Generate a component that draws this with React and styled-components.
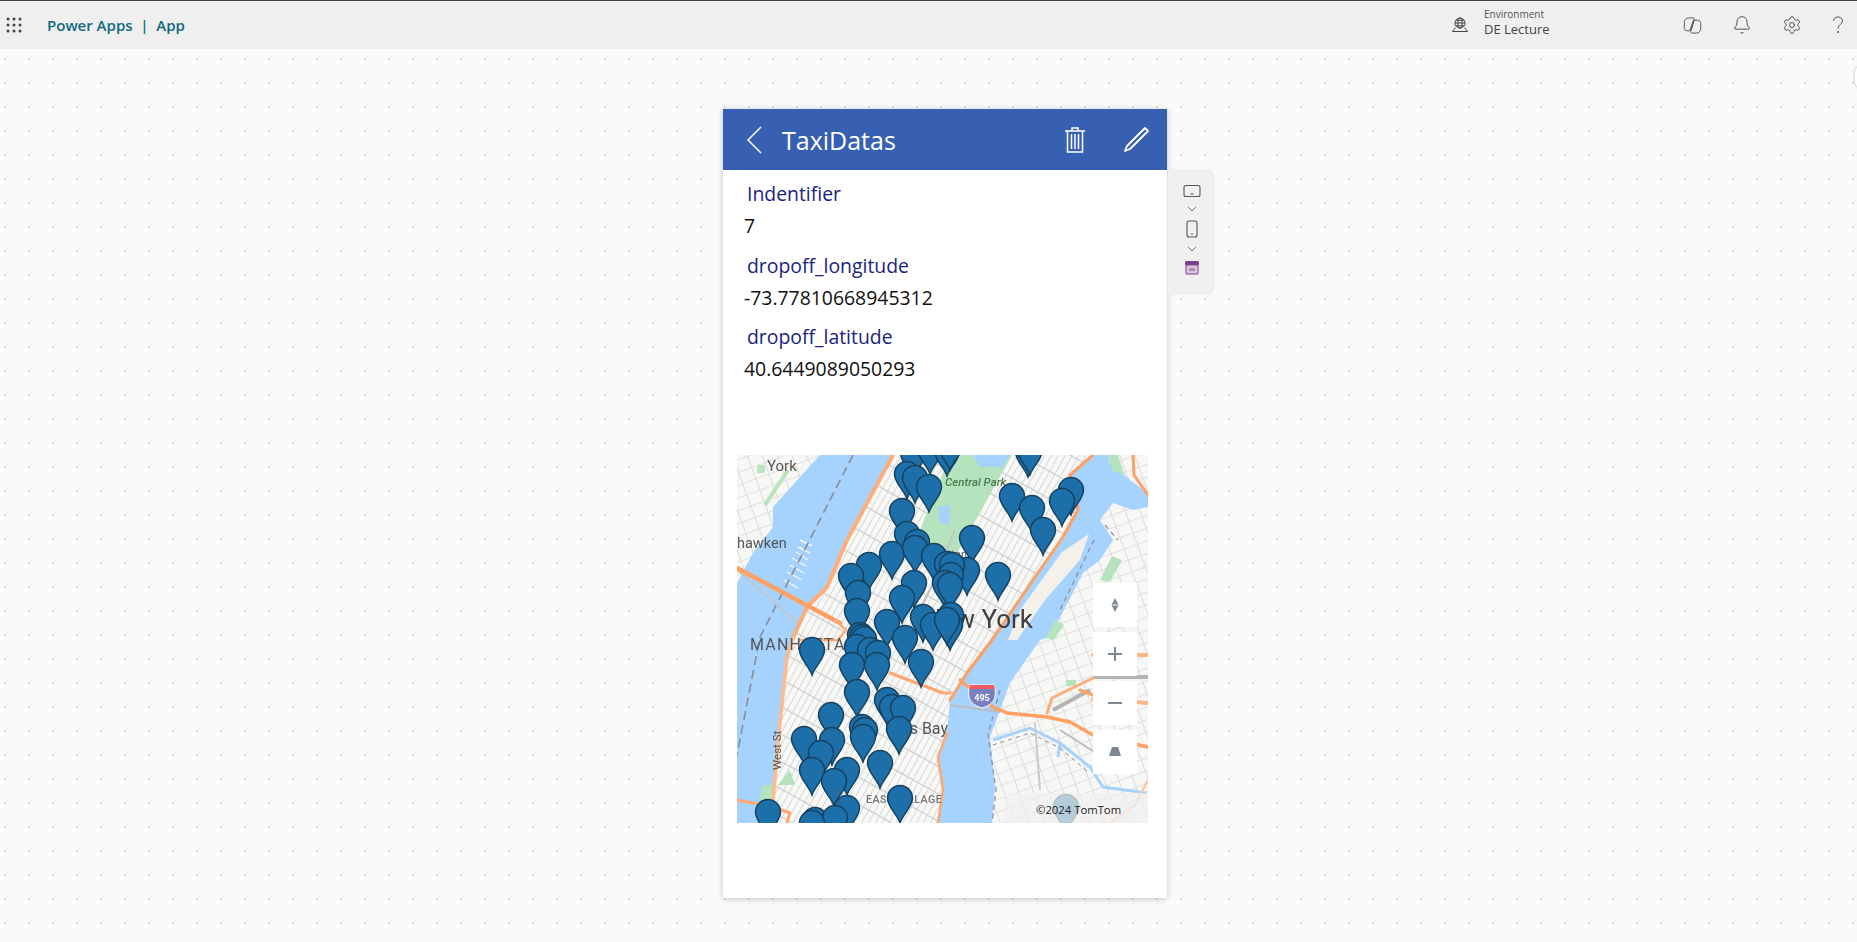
import React from 'react';
import styled, { createGlobalStyle } from 'styled-components';
import { Bell, Settings } from 'lucide-react';

const GlobalStyle = createGlobalStyle`
  html, body { margin: 0; padding: 0; height: 100%; overflow: hidden; }
  body { font-family: "Open Sans", "Liberation Sans", sans-serif; background: #fafafa; }
  #root { height: 100%; }
`;

const Page = styled.div`
  height: 100%;
  display: flex;
  flex-direction: column;
  position: relative;
`;

const TopBar = styled.header`
  height: 48px;
  flex: none;
  display: flex;
  align-items: center;
  background: #efefef;
  border-top: 1px solid #444;
  color: #444;
`;

const Waffle = styled.svg`
  width: 16px;
  height: 16px;
  margin: 0 25px 0 6px;
  flex: none;
`;

const Brand = styled.div`
  font-size: 15px;
  font-weight: 600;
  color: #0f6a80;
  white-space: pre;
`;

const Environment = styled.div`
  margin-left: auto;
  display: flex;
  align-items: center;
  gap: 15px;
`;

const EnvText = styled.div`
  display: flex;
  flex-direction: column;
  width: 199px;
  padding-bottom: 5px;
`;

const EnvLabel = styled.span`
  font-size: 10px;
  line-height: 13px;
  color: #555;
`;

const EnvName = styled.span`
  font-size: 13px;
  line-height: 17px;
  color: #444;
`;

const BarIcons = styled.div`
  display: flex;
  align-items: center;
  gap: 30px;
  padding-right: 13px;
`;

const Canvas = styled.main`
  flex: 1;
  display: flex;
  align-items: flex-start;
  padding: 60px 0 0 723px;
  background-color: #fafafa;
  background-image: radial-gradient(circle at 1px 1px, #dadada 1px, transparent 1.2px);
  background-size: 24px 24px;
  background-position: 4px 9px;
`;

const Card = styled.section`
  width: 444px;
  height: 789px;
  flex: none;
  background: #fff;
  box-shadow: 0 1px 6px rgba(0, 0, 0, 0.22);
`;

const CardHeader = styled.div`
  height: 61px;
  display: flex;
  align-items: center;
  background: #3860b2;
  color: #fff;
  padding: 0 17px 0 23px;
`;

const CardTitle = styled.h1`
  margin: 0 auto 0 20px;
  font-size: 25px;
  font-weight: 400;
`;

const Fields = styled.div`
  height: 285px;
  padding-top: 7px;
  box-sizing: border-box;
`;

const Field = styled.div`
  height: 71.5px;
`;

const FieldLabel = styled.div`
  padding-left: 24px;
  font-size: 19.4px;
  line-height: 34px;
  color: #1a237e;
`;

const FieldValue = styled.div`
  padding-left: 21px;
  font-size: 19.4px;
  line-height: 29px;
  color: #111;
`;

const MapBox = styled.div`
  position: relative;
  width: 411px;
  height: 368px;
  margin-left: 14px;
  overflow: hidden;
  background: #f4f4f2;
`;

const MapDrawing = styled.svg`
  display: block;
  width: 411px;
  height: 368px;
  font-family: Roboto, "Liberation Sans", sans-serif;
`;

const MapControls = styled.div`
  position: absolute;
  left: 356px;
  top: 128px;
  display: flex;
  flex-direction: column;
  gap: 5px;
`;

const MapButton = styled.div`
  width: 44px;
  height: 44px;
  background: #fff;
  display: flex;
  align-items: center;
  justify-content: center;
`;

const Attribution = styled.div`
  position: absolute;
  right: 0;
  bottom: 0;
  width: 143px;
  height: 30px;
  box-sizing: border-box;
  padding: 9px 0 0 31px;
  background: rgba(240, 240, 240, 0.72);
  font-size: 11.3px;
  line-height: 16px;
  color: #222;
  white-space: nowrap;
`;

const Rail = styled.aside`
  width: 47px;
  height: 126px;
  margin-top: 60px;
  margin-left: 1px;
  flex: none;
  box-sizing: border-box;
  padding-top: 15px;
  display: flex;
  flex-direction: column;
  align-items: center;
  gap: 8px;
  background: #f0f0f0;
  border-radius: 0 8px 8px 0;
`;

const EdgeBubble = styled.div`
  position: absolute;
  right: -10px;
  top: 66px;
  width: 12px;
  height: 22px;
  border-radius: 8px;
  background: #fff;
  box-shadow: 0 0 3px rgba(0, 0, 0, 0.3);
`;

const PIN = 'M0 0C-3-9-12.5-16-12.5-25A12.5 12.5 0 1 1 12.5-25C12.5-16 3-9 0 0Z';

// tip of each marker, page coordinates, back to front
const pins = [
  [913, 478], [930, 474], [947, 476], [950, 470], [1028, 477], [1030, 475],
  [907, 499], [915, 503], [929, 512], [1012, 521], [1032, 533], [1043, 555],
  [1071, 515], [1062, 526], [902, 536], [907, 559], [917, 567], [972, 563],
  [892, 579], [915, 573], [934, 581], [947, 589], [967, 595], [998, 600],
  [952, 590], [951, 600], [869, 590], [851, 601], [945, 608], [950, 610],
  [914, 608], [858, 618], [902, 623], [951, 640], [950, 650], [857, 636],
  [887, 647], [923, 642], [933, 650], [947, 645], [812, 675], [860, 660],
  [862, 662], [864, 664], [857, 672], [870, 675], [878, 678], [905, 663],
  [852, 690], [877, 690], [921, 687], [857, 717], [887, 725], [892, 732],
  [903, 733], [831, 740], [862, 752], [865, 755], [899, 754], [863, 762],
  [804, 764], [832, 765], [821, 778], [847, 795], [812, 795], [880, 788],
  [834, 806], [900, 823], [768, 837], [847, 833], [815, 845], [835, 843], [812, 848],
];

function MapArt() {
  return (
    <MapDrawing viewBox="737 455 411 368">
      <defs>
        <pattern id="grid" width="24" height="6" patternUnits="userSpaceOnUse" patternTransform="rotate(-61)">
          <rect width="24" height="6" fill="#f8f8f7" />
          <path d="M0 .5H24" stroke="#d8d8d8" strokeWidth="1" />
          <path d="M.5 0V6" stroke="#cacaca" strokeWidth="1.3" />
        </pattern>
        <pattern id="gridWide" width="14" height="12" patternUnits="userSpaceOnUse" patternTransform="rotate(-20)">
          <rect width="14" height="12" fill="#f7f7f6" />
          <path d="M0 .5H14" stroke="#e0e0e0" strokeWidth="1" />
          <path d="M.5 0V12" stroke="#dcdcdc" strokeWidth="1" />
        </pattern>
        <filter id="soft"><feGaussianBlur stdDeviation="0.45" /></filter>
      </defs>

      <g filter="url(#soft)">
        <rect x="737" y="455" width="411" height="368" fill="url(#gridWide)" />
        {/* manhattan blocks */}
        <path d="M893 455L847 540 827 587 807 607 793 638 787 657 780 723 773 800 773 823H938L943 790 938 757 947 733 950 700 967 673 992 640 1033 580 1063 537 1078 510 1070 475 1093 455Z" fill="url(#grid)" />

        {/* rivers */}
        <path d="M820 455L773 507 773 527 753 553 737 583V823H773L773 800 780 723 787 657 793 638 807 607 827 587 847 540 893 455Z" fill="#a5d3fe" />
        <path d="M1093 455L1070 475 1078 510 1063 537 1033 580 992 640 967 673 950 700 947 733 938 757 943 790 938 823H992L995 787 990 737 1010 683 1040 640 1050 637 1083 573 1100 560 1113 540 1100 520 1113 503 1133 510 1148 507V493L1130 480 1110 463 1108 455Z" fill="#a5d3fe" />
        <path d="M1089 534L1062 552 1020 610 1008 640 1017 640 1045 600 1080 560Z" fill="#f3f1ea" />
        <path d="M993 740L1030 728 1060 743 1090 767 1103 787 1147 793M1060 743L1058 757" fill="none" stroke="#a5d3fe" strokeWidth="3" />
        <path d="M993 745L1030 733 1060 748 1088 772" fill="none" stroke="#8d8a98" strokeWidth="1" strokeDasharray="4 4" />
        <path d="M800 540L812 546M798 547L810 553M796 552L808 560M792 558L806 566M790 565L804 573M787 572L802 580M784 580L798 588" fill="none" stroke="#fff" strokeWidth="1.4" opacity="0.85" />

        {/* parks */}
        <path d="M950 455H1012L972 527 950 565 918 535Z" fill="#b5e3bd" />
        <path d="M973 455H1010L1002 467H980Z" fill="#a5d3fe" />
        <path d="M938 507L950 505V525L940 523Z" fill="#a5d3fe" />
        <path d="M757 465H765V473H757Z" fill="#b9e4bd" />
        <path d="M788 470L765 505" fill="none" stroke="#b9e4bd" strokeWidth="4" />
        <path d="M1108 455L1112 470 1125 476 1118 455Z" fill="#b5e3bd" />
        <path d="M1046 638L1055 620 1064 625 1054 640Z" fill="#b5e3bd" />
        <path d="M1066 680H1076V686H1066Z" fill="#b5e3bd" />
        <path d="M762 785H775L773 800H760Z" fill="#b5e3bd" />
        <path d="M778 785L790 770 795 785Z" fill="#b5e3bd" />
        <path d="M1100 580L1112 556 1122 560 1110 582Z" fill="#b5e3bd" />

        {/* dashed state line */}
        <path d="M853 455L760 637 737 755" fill="none" stroke="#8d8a98" strokeWidth="1.6" strokeDasharray="9 5" />
        <path d="M1000 690L988 735 996 790 992 823M1105 525L1118 540M1094 540L1060 610" fill="none" stroke="#8d8a98" strokeWidth="1.2" strokeDasharray="5 4" />

        {/* gray roads and rail */}
        <path d="M737 570L760 590 800 625M955 530L930 590 905 640" fill="none" stroke="#c4c4c4" strokeWidth="2" />
        <path d="M1053 710L1090 690M1093 677H1148" fill="none" stroke="#b5b2b4" strokeWidth="4" />
        <path d="M1035 723L1040 790" fill="none" stroke="#c9c9c9" strokeWidth="2" />
        <path d="M950 705L1000 712M1110 762L1060 730" fill="none" stroke="#bcbcbc" strokeWidth="2" />

        {/* highways */}
        <g fill="none" strokeLinejoin="round" strokeLinecap="round">
          <path d="M893 455L847 540 827 587 807 607 793 638" stroke="#ffad78" strokeWidth="4" />
          <path d="M793 638L787 657 780 723 773 800 773 823" stroke="#ffba8c" strokeWidth="3.5" />
          <path d="M737 568L840 623" stroke="#ff9f62" strokeWidth="4.5" />
          <path d="M835 620L846 630 838 640H800" stroke="#ffad78" strokeWidth="2.5" />
          <path d="M1093 455L1070 475 1078 510 1063 537 1033 580 992 640 967 673 950 700" stroke="#ff9f62" strokeWidth="3" />
          <path d="M1133 455L1134 475 1148 495" stroke="#ff9f62" strokeWidth="3" />
          <path d="M960 680L993 707 1007 713 1047 717 1070 722 1093 735 1148 747" stroke="#ff9f62" strokeWidth="3.5" />
          <path d="M1047 713L1052 698 1093 678" stroke="#ffad78" strokeWidth="3" />
          <path d="M1093 655H1148M1093 699L1148 703" stroke="#ffb583" strokeWidth="4" />
          <path d="M1080 690L1093 695" stroke="#ff9f62" strokeWidth="3" />
          <path d="M890 673L943 693 950 693" stroke="#ffa771" strokeWidth="3" />
          <path d="M737 800L773 807 790 813 787 822" stroke="#ffa771" strokeWidth="3" />
          <path d="M947 733L938 757 943 790 938 823" stroke="#ffa771" strokeWidth="2.5" />
          <path d="M1110 823L1135 805 1148 780" stroke="#f7c9a8" strokeWidth="2.5" />
        </g>

        {/* interstate shield */}
        <path d="M970 685H994C997 695 996 704 982 708 968 704 967 695 970 685Z" fill="#7a7fc0" stroke="#fff" strokeWidth="1" />
        <path d="M970 685H994L995 689H969Z" fill="#ef5a63" />
        <text x="982" y="701" textAnchor="middle" fontSize="9" fontWeight="700" fill="#fff">495</text>

        {/* place names */}
        <text x="767" y="471" fontSize="15" fill="#555">York</text>
        <text x="737" y="548" fontSize="14.5" fill="#555">hawken</text>
        <text x="750" y="650" fontSize="16" letterSpacing="1.2" fill="#555">MANHATTAN</text>
        <text x="1033" y="628" textAnchor="end" fontSize="26" fill="#3c3c3c">New York</text>
        <text x="948" y="734" textAnchor="end" fontSize="16" fill="#555">Kips Bay</text>
        <text x="945" y="486" fontSize="11.5" fontWeight="500" fontStyle="italic" fill="#4d7a50">Central Park</text>
        <text x="967" y="558" textAnchor="end" fontSize="11" fill="#666">Manhattan</text>
        <text x="866" y="803" fontSize="10.5" letterSpacing="0.6" fontWeight="500" fill="#777">EAST VILLAGE</text>
        <text transform="translate(781 770) rotate(-90)" fontSize="11.5" fill="#555">West St</text>
      </g>

      {pins.map(([x, y], i) => (
        <path key={i} d={PIN} transform={`translate(${x} ${y})`} fill="#1c6fa8" stroke="#16415f" strokeWidth="1.5" />
      ))}
      <path d={PIN} transform="translate(1066 832)" fill="#1c6fa8" stroke="#16415f" strokeWidth="1.5" />
    </MapDrawing>
  );
}

function ControlIcon({ d, filled }) {
  return (
    <svg width="18" height="18" viewBox="0 0 18 18">
      <path d={d} fill={filled ? '#7d8790' : 'none'} stroke={filled ? 'none' : '#7d8790'} strokeWidth="2" />
    </svg>
  );
}

function Copilot() {
  return (
    <svg width="19" height="19" viewBox="0 0 18 18" fill="none" stroke="#555" strokeWidth="0.9">
      <path d="M5.5 1.8H9.5C10.4 1.8 11 2.5 10.7 3.4L8 12.6C7.7 13.4 7 14 6.2 14H4C2.2 14 1.2 12.6 1.2 11V6.2C1.2 3.5 3 1.8 5.5 1.8Z" />
      <path d="M10 4H14C15.8 4 16.8 5.4 16.8 7V11.8C16.8 14.5 15 16.2 12.5 16.2H8.5C7.6 16.2 7 15.5 7.3 14.6L10 5.4C10 5 10 4.4 10 4Z" />
      <path d="M6.4 13.8L9.8 4.2" />
    </svg>
  );
}

export default function App() {
  const fields = [
    ['Indentifier', '7'],
    ['dropoff_longitude', '-73.77810668945312'],
    ['dropoff_latitude', '40.6449089050293'],
  ];

  return (
    <Page>
      <GlobalStyle />
      <TopBar>
        <Waffle viewBox="0 0 16 16" fill="#444">
          {[2, 8, 14].flatMap((y) => [2, 8, 14].map((x) => <circle key={`${x}-${y}`} cx={x} cy={y} r="1.5" />))}
        </Waffle>
        <Brand>{'Power Apps  |  App'}</Brand>
        <Environment>
          <svg width="18" height="16" viewBox="0 0 18 16" fill="none" stroke="#444" strokeWidth="1">
            <circle cx="9" cy="6" r="5" />
            <ellipse cx="9" cy="6" rx="2.2" ry="5" />
            <path d="M4 6H14M5 3.2H13M5 8.8H13" />
            <path d="M4.5 10.5L1.5 14.5H16.5L13.5 10.5" />
          </svg>
          <EnvText>
            <EnvLabel>Environment</EnvLabel>
            <EnvName>DE Lecture</EnvName>
          </EnvText>
        </Environment>
        <BarIcons>
          <Copilot />
          <Bell size={20} strokeWidth={1.1} />
          <Settings size={20} strokeWidth={1.1} />
          <svg width="12" height="18" viewBox="0 0 12 18" fill="none" stroke="#555" strokeWidth="1">
            <path d="M1.5 5C1.5 2.6 3.4 1 6 1S10.5 2.6 10.5 5C10.5 8 6 8.6 6 12.5" />
            <circle cx="6" cy="16" r=".6" fill="#555" />
          </svg>
        </BarIcons>
      </TopBar>

      <Canvas>
        <Card>
          <CardHeader>
            <svg width="16" height="28" viewBox="0 0 16 28" fill="none" stroke="#fff" strokeWidth="1.5">
              <path d="M15 1L2 14 15 27" />
            </svg>
            <CardTitle>TaxiDatas</CardTitle>
            <svg width="20" height="26" viewBox="0 0 20 26" fill="none" stroke="#fff" strokeWidth="1.5" style={{ marginRight: 38 }}>
              <path d="M0 4H20M7 4V1H13V4" />
              <path d="M2.5 4V25H17.5V4M6.5 7V22M10 7V22M13.5 7V22" />
            </svg>
            <svg width="27" height="27" viewBox="0 0 27 27" fill="none" stroke="#fff" strokeWidth="1.8" strokeLinejoin="round">
              <path d="M22 2L25 5 7 23 2 25 4 20Z" />
            </svg>
          </CardHeader>
          <Fields>
            {fields.map(([label, value]) => (
              <Field key={label}>
                <FieldLabel>{label}</FieldLabel>
                <FieldValue>{value}</FieldValue>
              </Field>
            ))}
          </Fields>
          <MapBox>
            <MapArt />
            <MapControls>
              <MapButton>
                <svg width="18" height="18" viewBox="0 0 18 18"><path d="M9 2L12.5 9 9 16 5.5 9Z" fill="#7d8790" /><path d="M6.5 9H11.5" stroke="#fff" /></svg>
              </MapButton>
              <MapButton><ControlIcon d="M9 2V16M2 9H16" /></MapButton>
              <MapButton><ControlIcon d="M2 9H16" /></MapButton>
              <MapButton><ControlIcon filled d="M6 4H12L15 13H3Z" /></MapButton>
            </MapControls>
            <Attribution>©2024 TomTom</Attribution>
          </MapBox>
        </Card>
        <Rail>
          <svg width="18" height="14" viewBox="0 0 18 14" fill="none" stroke="#555" strokeWidth="1.1">
            <rect x="1" y="1.5" width="16" height="11" rx="2" /><path d="M7.5 10H10.5" />
          </svg>
          <svg width="10" height="6" viewBox="0 0 10 6" fill="none" stroke="#777"><path d="M1 1L5 5 9 1" /></svg>
          <svg width="12" height="18" viewBox="0 0 12 18" fill="none" stroke="#555" strokeWidth="1.1">
            <rect x="1" y="1" width="10" height="16" rx="2" /><path d="M5 14H7" />
          </svg>
          <svg width="10" height="6" viewBox="0 0 10 6" fill="none" stroke="#777"><path d="M1 1L5 5 9 1" /></svg>
          <svg width="16" height="16" viewBox="0 0 16 16">
            <rect x="1" y="1" width="14" height="14" rx="2" fill="#b48abf" />
            <path d="M1 5V3a2 2 0 0 1 2-2H13a2 2 0 0 1 2 2V5Z" fill="#7b3f8c" />
            <rect x="4" y="7" width="8" height="5" fill="none" stroke="#fff" />
          </svg>
        </Rail>
      </Canvas>
      <EdgeBubble />
    </Page>
  );
}
